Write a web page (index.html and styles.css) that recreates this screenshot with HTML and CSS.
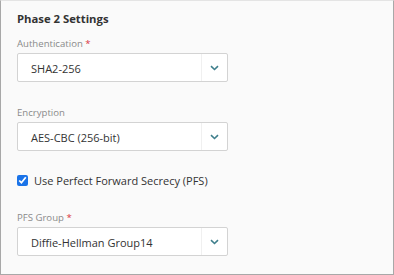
FILE: index.html
```html
<!DOCTYPE html>
<html lang="en">
<head>
    <meta charset="UTF-8">
    <title>Phase 2 Settings</title>
    <link rel="stylesheet" href="styles.css">
</head>
<body>
    <div class="panel">
        <h2 class="title">Phase 2 Settings</h2>

        <div class="field">
            <label class="label">Authentication <span class="req">*</span></label>
            <div class="select">
                <span class="value">SHA2-256</span>
                <span class="arrow">
                    <svg width="9" height="6" viewBox="0 0 9 6"><path d="M1 1.2l3.5 3.3 3.5-3.3" fill="none" stroke="#3f7f8c" stroke-width="1.6"/></svg>
                </span>
            </div>
        </div>

        <div class="field">
            <label class="label">Encryption</label>
            <div class="select">
                <span class="value">AES-CBC (256-bit)</span>
                <span class="arrow">
                    <svg width="9" height="6" viewBox="0 0 9 6"><path d="M1 1.2l3.5 3.3 3.5-3.3" fill="none" stroke="#3f7f8c" stroke-width="1.6"/></svg>
                </span>
            </div>
        </div>

        <label class="check">
            <input type="checkbox" checked>
            <span>Use Perfect Forward Secrecy (PFS)</span>
        </label>

        <div class="field">
            <label class="label">PFS Group <span class="req">*</span></label>
            <div class="select">
                <span class="value">Diffie-Hellman Group14</span>
                <span class="arrow">
                    <svg width="9" height="6" viewBox="0 0 9 6"><path d="M1 1.2l3.5 3.3 3.5-3.3" fill="none" stroke="#3f7f8c" stroke-width="1.6"/></svg>
                </span>
            </div>
        </div>
    </div>
</body>
</html>
```

FILE: styles.css
```css
html, body { margin: 0; padding: 0; }
body { font-family: "Open Sans", sans-serif; background: #fff; }
.panel { width: 394px; height: 275px; box-sizing: border-box; background: #fafafa; border: 1px solid #a8a8a8; border-top-color: #e4e4e4; padding: 9px 16px 0; }
.title { margin: 0 0 8px; font-size: 11.3px; font-weight: 700; color: #333; line-height: 18px; }
.label { display: block; font-size: 9.6px; color: #8a8a8a; line-height: 16px; margin-bottom: 1px; }
.req { color: #d9363e; }
.select { width: 211px; height: 29px; box-sizing: border-box; background: #fff; border: 1px solid #d3d3d3; border-radius: 2px; display: flex; align-items: center; justify-content: space-between; }
.value { padding-left: 13px; font-size: 11px; color: #333; padding-top: 1px; }
.arrow { width: 26px; height: 100%; display: flex; align-items: center; justify-content: center; border-left: 1px solid #f0f0f0; padding-top: 1px; box-sizing: border-box; }
.field + .field { margin-top: 23px; }
.check { display: flex; align-items: center; height: 17px; margin: 21px 0 21px; font-size: 11px; color: #333; }
.check input { width: 11px; height: 11px; margin: 0 6px 0 0; accent-color: #1a73e8; }
```
